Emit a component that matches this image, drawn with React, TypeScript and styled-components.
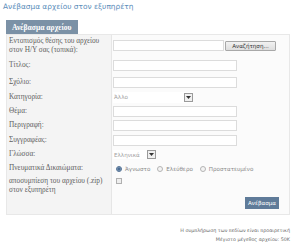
import React from "react";
import styled, { createGlobalStyle } from "styled-components";

const GlobalStyle = createGlobalStyle`
  html, body {
    margin: 0;
    padding: 0;
    background: #ffffff;
  }
  * {
    box-sizing: border-box;
  }
`;

const Page = styled.div`
  display: flex;
  flex-direction: column;
  width: 300px;
  height: 246px;
  padding: 2px 10px 0 3px;
  font-family: "DejaVu Sans", Verdana, sans-serif;
`;

const Title = styled.div`
  flex: 0 0 auto;
  margin: 0 0 8px;
  font-size: 7.4px;
  line-height: 10px;
  color: #5b8dba;
`;

const Form = styled.div`
  display: flex;
  flex-direction: column;
  align-items: flex-start;
  margin-left: 3px;
`;

const Tab = styled.div`
  display: flex;
  align-items: center;
  height: 14px;
  padding: 0 6px;
  background: #7b91a6;
  color: #ffffff;
  font-family: "Liberation Serif", "DejaVu Serif", serif;
  font-size: 7.6px;
  font-weight: bold;
`;

const Panel = styled.div`
  display: grid;
  align-self: stretch;
  grid-template-columns: 105px 1fr;
  grid-template-rows: 21px 18px 16px 14px 14px 15px 14px 15px 13px 22px 17px;
  border: 1px solid #e8e8e8;
  background: #fbfbfb;
`;

const Label = styled.div<{ $top?: boolean }>`
  display: flex;
  align-items: ${(p) => (p.$top ? "flex-start" : "center")};
  padding: ${(p) => (p.$top ? "2px 0 0 2px" : "0 0 0 2px")};
  background: #f4f4f4;
  border-right: 1px solid #e6e6e6;
  color: #5e5e5e;
  font-family: "Liberation Serif", "DejaVu Serif", serif;
  font-size: 7.3px;
  line-height: 8.5px;
`;

const Field = styled.div<{ $top?: boolean }>`
  display: flex;
  align-items: ${(p) => (p.$top ? "flex-start" : "center")};
  gap: 1px;
  padding: ${(p) => (p.$top ? "3px 0 0 1px" : "0 0 0 1px")};
`;

const TextInput = styled.div<{ $width: number }>`
  width: ${(p) => p.$width}px;
  height: 11px;
  background: #ffffff;
  border: 1px solid #dcdcdc;
`;

const BrowseButton = styled.div`
  display: flex;
  align-items: center;
  justify-content: center;
  width: 51px;
  height: 10px;
  background: linear-gradient(#f2f2f2, #dedede);
  border: 1px solid #a8a8a8;
  border-radius: 1px;
  color: #333333;
  font-size: 5.6px;
`;

const Select = styled.div<{ $width: number }>`
  display: flex;
  align-items: center;
  justify-content: space-between;
  width: ${(p) => p.$width}px;
  height: ${(p) => (p.$width > 60 ? 11 : 9)}px;
  padding-left: 1px;
  background: #ffffff;
  color: #a0a0a0;
  font-size: 5.6px;
`;

const SelectArrow = styled.span`
  display: flex;
  align-items: center;
  justify-content: center;
  width: 9px;
  height: 9px;
  background: #f0f0f0;
  border: 1px solid #9a9a9a;
`;

const RadioGroup = styled.div`
  display: flex;
  align-items: center;
  gap: 7px;
  padding-left: 3px;
`;

const RadioOption = styled.label`
  display: flex;
  align-items: center;
  gap: 3px;
  color: #8a8a8a;
  font-size: 5.6px;
`;

const RadioDot = styled.span<{ $checked?: boolean }>`
  width: 6px;
  height: 6px;
  border-radius: 50%;
  border: 1px solid ${(p) => (p.$checked ? "#4f6f93" : "#b4b4b4")};
  background: ${(p) => (p.$checked ? "radial-gradient(#4a6c94 40%, #9fb3c9 75%)" : "#f4f4f4")};
`;

const Checkbox = styled.span`
  width: 6px;
  height: 6px;
  margin-left: 3px;
  border: 1px solid #b0b0b0;
  background: #eeeeee;
`;

const Spacer = styled.div`
  background: #f4f4f4;
  border-right: 1px solid #e6e6e6;
`;

const Actions = styled.div`
  display: flex;
  justify-content: flex-end;
  align-items: flex-start;
  padding-right: 10px;
`;

const SubmitButton = styled.div`
  display: flex;
  align-items: center;
  justify-content: center;
  width: 34px;
  height: 12px;
  background: #5f7b99;
  color: #ffffff;
  font-size: 5.6px;
`;

const Notes = styled.div`
  margin-top: 11px;
  text-align: right;
  color: #666666;
  font-size: 4.8px;
  line-height: 9px;
`;

const Arrow = () => (
  <svg width="5" height="3" viewBox="0 0 5 3">
    <path d="M0 0h5L2.5 3z" fill="#333" />
  </svg>
);

const fields = ["Τίτλος:", "Σχόλιο:"];

const moreFields = ["Θέμα:", "Περιγραφή:", "Συγγραφέας:"];

export default function App() {
  return (
    <Page>
      <GlobalStyle />
      <Title>Ανέβασμα αρχείου στον εξυπηρέτη</Title>
      <Form>
        <Tab>Ανέβασμα αρχείου</Tab>
        <Panel>
          <Label>
            Εντοπισμός θέσης του αρχείου
            <br />
            στον Η/Υ σας (τοπικά):
          </Label>
          <Field>
            <TextInput $width={111} />
            <BrowseButton>Αναζήτηση...</BrowseButton>
          </Field>

          {fields.map((label) => (
            <React.Fragment key={label}>
              <Label>{label}</Label>
              <Field>
                <TextInput $width={124} />
              </Field>
            </React.Fragment>
          ))}

          <Label>Κατηγορία:</Label>
          <Field>
            <Select $width={80}>
              Άλλο
              <SelectArrow>
                <Arrow />
              </SelectArrow>
            </Select>
          </Field>

          {moreFields.map((label) => (
            <React.Fragment key={label}>
              <Label>{label}</Label>
              <Field>
                <TextInput $width={124} />
              </Field>
            </React.Fragment>
          ))}

          <Label>Γλώσσα:</Label>
          <Field>
            <Select $width={43}>
              Ελληνικά
              <SelectArrow>
                <Arrow />
              </SelectArrow>
            </Select>
          </Field>

          <Label>Πνευματικά Δικαιώματα:</Label>
          <Field>
            <RadioGroup>
              <RadioOption>
                <RadioDot $checked />
                Άγνωστο
              </RadioOption>
              <RadioOption>
                <RadioDot />
                Ελεύθερο
              </RadioOption>
              <RadioOption>
                <RadioDot />
                Προστατευμένο
              </RadioOption>
            </RadioGroup>
          </Field>

          <Label $top>
            αποσυμπίεση του αρχείου (.zip)
            <br />
            στον εξυπηρέτη
          </Label>
          <Field $top>
            <Checkbox />
          </Field>

          <Spacer />
          <Actions>
            <SubmitButton>Ανέβασμα</SubmitButton>
          </Actions>
        </Panel>
      </Form>
      <Notes>
        Η συμπλήρωση των πεδίων είναι προαιρετική
        <br />
        Μέγιστο μέγεθος αρχείου: 50Κ
      </Notes>
    </Page>
  );
}
